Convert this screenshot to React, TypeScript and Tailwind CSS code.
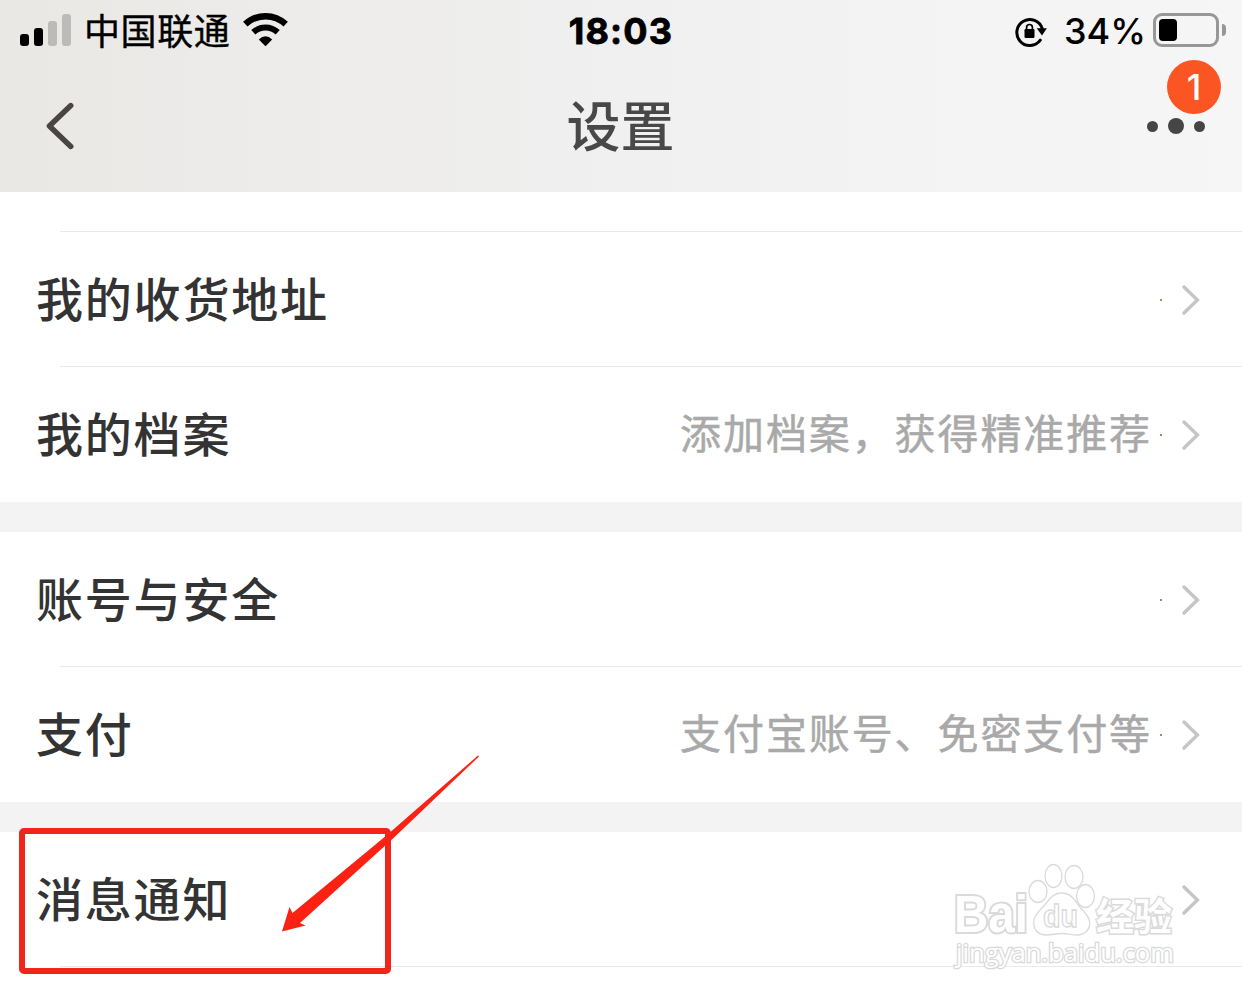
import { ReactNode } from "react";

type Item = {
  title: string;
  detail?: string;
  dot?: boolean;
};

const groups: Item[][] = [
  [
    { title: "我的收货地址", dot: true },
    { title: "我的档案", detail: "添加档案，获得精准推荐", dot: true },
  ],
  [
    { title: "账号与安全", dot: true },
    { title: "支付", detail: "支付宝账号、免密支付等", dot: true },
  ],
];

function StatusBar() {
  return (
    <div className="flex h-[60px] items-start justify-between">
      <div className="flex w-[400px] items-start pl-5 text-black">
        <div className="mt-[14px] flex h-8 w-[51px] items-end justify-between">
          <span className="h-3 w-[9px] rounded-[3px] bg-black" />
          <span className="h-[18px] w-[9px] rounded-[3px] bg-black" />
          <span className="h-[25px] w-[9px] rounded-[3px] bg-[#bcbbb9]" />
          <span className="h-8 w-[9px] rounded-[3px] bg-[#bcbbb9]" />
        </div>
        <span className="mt-1 ml-[13px] text-[36px] leading-[50px] tracking-[0.6px] whitespace-nowrap [-webkit-text-stroke:0.4px]">
          中国联通
        </span>
        <svg className="mt-3 ml-3 h-[35px] w-[47px]" viewBox="0 0 47 35" fill="none">
          <path d="M3.3 12.2a29.5 29.5 0 0 1 40.4 0" stroke="#000" strokeWidth="6.4" />
          <path d="M11.3 20.3a18 18 0 0 1 24.4 0" stroke="#000" strokeWidth="6" />
          <path d="M16.8 27.6q6.7-6.8 13.4 0L23.5 34.3Z" fill="#000" />
        </svg>
      </div>

      <span className="mt-[6px] font-['Inter'] text-[36px] leading-[50px] font-bold tracking-[1.2px] text-black [-webkit-text-stroke:0.8px]">
        18:03
      </span>

      <div className="flex w-[400px] items-start justify-end pr-4 text-black">
        <svg className="mt-[15px] mr-[17px] h-8 w-8" viewBox="0 0 32 32" fill="none">
          <path
            d="M25.3 25.2A13 13 0 1 1 27.2 13.5"
            stroke="#000"
            strokeWidth="3"
            strokeLinecap="round"
          />
          <path d="M21.7 13.2h10.2L27 20.5Z" fill="#000" />
          <rect x="9.5" y="14" width="10" height="9" rx="1.2" fill="#000" />
          <path d="M11.6 15v-2.6a2.9 2.9 0 0 1 5.8 0V15" stroke="#000" strokeWidth="1.7" />
        </svg>
        <span className="mt-[6px] font-['Inter'] text-[36px] leading-[50px] font-medium">
          34%
        </span>
        <div className="mt-[13px] ml-[7px] flex h-[34px] w-[66px] items-center rounded-[9px] border-[3px] border-[#979797] pl-[3px]">
          <span className="h-[22px] w-[18px] rounded-[4px] bg-black" />
        </div>
        <span className="mt-6 ml-[3px] h-3 w-1 rounded-r-full bg-[#979797]" />
      </div>
    </div>
  );
}

function NavBar() {
  return (
    <div className="flex h-[132px] items-center justify-between">
      <div className="flex w-[300px] pl-[46px]">
        <svg className="h-[50px] w-[30px]" viewBox="0 0 30 50" fill="none">
          <path
            d="M24.8 4.5 3.4 25 24.8 45.5"
            stroke="#484543"
            strokeWidth="5.4"
            strokeLinecap="round"
            strokeLinejoin="round"
          />
        </svg>
      </div>
      <h1 className="-mt-1 pr-px text-[54px] leading-[80px] font-medium text-[#484848]">设置</h1>
      <div className="flex w-[300px] justify-end pr-[37px]">
        <div className="relative flex w-[58px] items-center justify-between">
          <span className="h-[11px] w-[11px] rounded-full bg-[#454545]" />
          <span className="h-4 w-4 rounded-full bg-[#454545]" />
          <span className="h-[11px] w-[11px] rounded-full bg-[#454545]" />
          <span className="absolute -top-[58px] left-5 flex h-[54px] w-[54px] items-center justify-center rounded-full bg-[#fa5523] font-['Inter'] text-[35px] font-medium text-white">
            1
          </span>
        </div>
      </div>
    </div>
  );
}

function Chevron() {
  return (
    <svg className="h-[34px] w-[22px] shrink-0" viewBox="0 0 22 34" fill="none">
      <path
        d="M4 4 17.4 17 4 30"
        stroke="#c5c5c5"
        strokeWidth="3.4"
        strokeLinecap="round"
      />
    </svg>
  );
}

function Row({ title, detail, dot }: Item) {
  return (
    <div className="flex h-[134px] items-center pt-0.5 pr-10 pl-9">
      <span className="pb-[7px] text-[47px] leading-[70px] font-medium tracking-[1.8px] text-[#333]">
        {title}
      </span>
      <span className="ml-auto pb-2 text-[41px] leading-[60px] tracking-[1.9px] text-[#a9a9a9] [-webkit-text-stroke:0.5px]">
        {detail}
      </span>
      <span className={`ml-2 h-0.5 w-0.5 ${dot ? "bg-[#a08a70]" : ""}`} />
      <span className="ml-[18px] flex">
        <Chevron />
      </span>
    </div>
  );
}

function Divider() {
  return <div className="ml-[60px] h-px bg-[#e9e9e9]" />;
}

function Group({ children }: { children: ReactNode }) {
  return <section className="h-[270px] bg-white">{children}</section>;
}

function Watermark() {
  return (
    <svg
      className="absolute top-[860px] left-[950px] h-[112px] w-[230px]"
      viewBox="0 0 230 112"
      fill="#fff"
      stroke="#dadada"
      strokeWidth="1.3"
    >
      <text
        x="4"
        y="72"
        className="font-['Liberation_Sans'] font-bold"
        fontSize="51"
        textLength="74"
        lengthAdjust="spacingAndGlyphs"
        strokeWidth="4"
        paintOrder="stroke"
      >
        Bai
      </text>
      <ellipse cx="88" cy="31.5" rx="9" ry="11" />
      <ellipse cx="103.5" cy="16" rx="8.5" ry="11.5" />
      <ellipse cx="124" cy="17" rx="9" ry="11.5" />
      <ellipse cx="135.5" cy="36" rx="9" ry="11.5" />
      <path d="M111.5 33c-8 0-12 6-16 11-5 6-10 9-11.5 16-1.5 10 5 15 12 15 6 0 10-1.5 16-1.5s10 1.5 15 1.5c8 0 14-6 12.5-14-1.5-7-7-10-12-17-4-6-8-11-16-11Z" />
      <text
        x="93"
        y="67"
        className="font-['Liberation_Sans'] font-bold"
        fontSize="31"
        textLength="35"
        lengthAdjust="spacingAndGlyphs"
      >
        du
      </text>
      <text
        x="146"
        y="70"
        className="font-bold"
        fontSize="38"
        textLength="76"
        strokeWidth="3"
        paintOrder="stroke"
      >
        经验
      </text>
      <text
        x="6"
        y="102"
        className="font-['Open_Sans']"
        fontSize="25"
        textLength="218"
        lengthAdjust="spacingAndGlyphs"
        strokeWidth="2.6"
        paintOrder="stroke"
      >
        jingyan.baidu.com
      </text>
    </svg>
  );
}

function Highlight() {
  return (
    <>
      <div className="absolute top-[828px] left-[19px] h-[146px] w-[372px] rounded-[5px] border-[6px] border-[#f1251b]" />
      <svg className="absolute top-[750px] left-[275px] h-[190px] w-[210px]" viewBox="0 0 210 190">
        <path
          d="M7 181.5 14.5 157l3 6L112 85 203 5.5l1 1L118 88.500 25 173l5.500 2.500Z"
          fill="#fb2213"
        />
      </svg>
    </>
  );
}

export default function App() {
  return (
    <main className="relative h-[997px] w-[1242px] overflow-hidden bg-white font-['Noto_Sans_CJK_SC',sans-serif]">
      <header className="h-[192px] bg-linear-to-r from-[#eae8e5] via-[#f0f0f0] to-[#f6f6f6]">
        <StatusBar />
        <NavBar />
      </header>

      <div className="h-[39px]" />
      <Divider />

      {groups.map((items) => (
        <div key={items[0].title}>
          <Group>
            <Row {...items[0]} />
            <Divider />
            <Row {...items[1]} />
          </Group>
          <div className="h-[30px] bg-[#f3f3f3]" />
        </div>
      ))}

      <Row title="消息通知" />
      <Divider />

      <Watermark />
      <Highlight />
    </main>
  );
}
